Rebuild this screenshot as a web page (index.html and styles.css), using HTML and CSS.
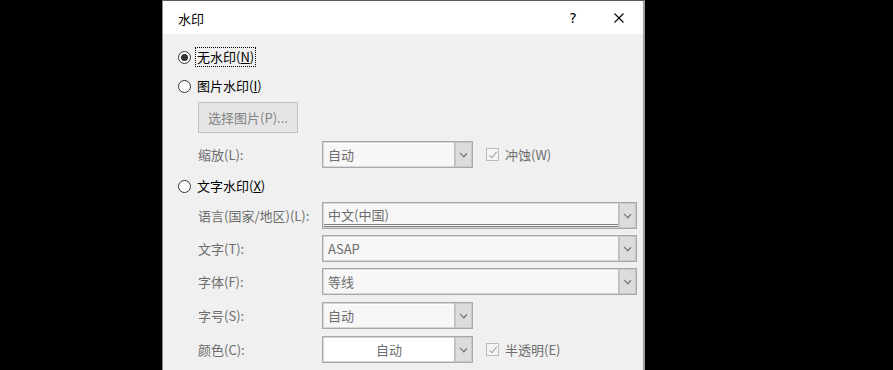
FILE: index.html
```html
<!DOCTYPE html>
<html lang="zh-CN">
<head>
  <meta charset="UTF-8">
  <meta name="viewport" content="width=device-width,initial-scale=1.0">
  <title>水印</title>
  <link rel="stylesheet" href="styles.css">
</head>
<body>
  <div class="dialog">
    <div class="titlebar">
      <span class="title">水印</span>
      <span class="tb-btn help">?</span>
      <span class="tb-btn close">
        <svg width="10" height="10" viewBox="0 0 10 10"><path d="M0.5 0.5L9.5 9.5M9.5 0.5L0.5 9.5" stroke="#000" stroke-width="1.1" fill="none"/></svg>
      </span>
    </div>

    <div class="content">
      <div class="radio-row r1">
        <span class="radio checked"></span>
        <span class="radio-label focus">无水印(<u>N</u>)</span>
      </div>
      <div class="radio-row r2">
        <span class="radio"></span>
        <span class="radio-label">图片水印(<u>I</u>)</span>
      </div>
      <div class="btn-row">
        <span class="button">选择图片(P)...</span>
      </div>
      <div class="form-row scale-row">
        <span class="field-label">缩放(L):</span>
        <div class="combo short"><span class="combo-text">自动</span><span class="drop"></span></div>
        <span class="check"></span><span class="check-label">冲蚀(W)</span>
      </div>

      <div class="radio-row r3">
        <span class="radio"></span>
        <span class="radio-label">文字水印(<u>X</u>)</span>
      </div>
      <div class="form-row lang-row">
        <span class="field-label">语言(国家/地区)(L):</span>
        <div class="combo long"><span class="combo-text lined">中文(中国)</span><span class="drop"></span></div>
      </div>
      <div class="form-row">
        <span class="field-label">文字(T):</span>
        <div class="combo long"><span class="combo-text">ASAP</span><span class="drop"></span></div>
      </div>
      <div class="form-row">
        <span class="field-label">字体(F):</span>
        <div class="combo long"><span class="combo-text">等线</span><span class="drop"></span></div>
      </div>
      <div class="form-row gap7">
        <span class="field-label">字号(S):</span>
        <div class="combo short"><span class="combo-text">自动</span><span class="drop"></span></div>
      </div>
      <div class="form-row gap7">
        <span class="field-label">颜色(C):</span>
        <div class="combo short"><span class="combo-text centered white">自动</span><span class="drop"></span></div>
        <span class="check"></span><span class="check-label">半透明(E)</span>
      </div>
    </div>
  </div>
</body>
</html>
```

FILE: styles.css
```css
body {
  margin: 0;
  background: #000;
}

.dialog {
  margin-left: 162px;
  width: 483px;
  height: 370px;
  box-sizing: border-box;
  border-top: 1px solid #5a5a5a;
  border-left: 1px solid #8c8c8c;
  border-right: 2px solid #9c9c9c;
  background: #f0f0f0;
  overflow: hidden;
  font-family: "Noto Sans CJK SC", sans-serif;
  font-size: 13px;
  color: #000;
}

.titlebar {
  height: 33px;
  background: #fff;
  display: flex;
  align-items: center;
  padding-left: 15px;
}
.title {
  flex: 1;
  padding-top: 1px;
}
.tb-btn {
  width: 46px;
  height: 33px;
  display: flex;
  align-items: center;
  justify-content: center;
}
.help {
  font-family: "DejaVu Sans", sans-serif;
  font-size: 14px;
}
.close {
  margin-right: 1px;
}

.content {
  padding-left: 15px;
}

/* radio buttons */
.radio-row {
  display: flex;
  align-items: center;
  height: 22px;
}
.r1 { margin-top: 12px; }
.r2 { margin-top: 7px; }
.r3 { margin-top: 7px; }
.radio {
  width: 13px;
  height: 13px;
  box-sizing: border-box;
  border: 1px solid #333;
  border-radius: 50%;
  background: #fff;
  display: flex;
  align-items: center;
  justify-content: center;
}
.radio.checked::after {
  content: "";
  width: 7px;
  height: 7px;
  border-radius: 50%;
  background: #333;
}
.radio-label {
  margin-left: 4px;
  padding: 0 1px;
  line-height: 18px;
  border: 1px solid transparent;
}
.radio-label.focus {
  border: 1px dotted #000;
}

/* image watermark button */
.btn-row {
  margin-top: 5px;
  margin-left: 20px;
}
.button {
  display: inline-flex;
  align-items: center;
  justify-content: center;
  width: 100px;
  height: 31px;
  box-sizing: border-box;
  border: 1px solid #bfbfbf;
  background: #e5e5e5;
  color: #838383;
}

/* labelled fields */
.form-row {
  display: flex;
  align-items: center;
  margin-top: 6px;
  margin-left: 20px;
}
.scale-row { margin-top: 8px; }
.lang-row { margin-top: 5px; }
.form-row.gap7 { margin-top: 7px; }
.field-label {
  width: 124px;
  color: #6d6d6d;
}

.combo {
  display: flex;
  height: 27px;
  box-sizing: border-box;
  border: 1px solid #a9a9a9;
  box-shadow: inset 0 0 0 1px #d6d6d6;
  background: #f7f7f7;
}
.combo.short { width: 151px; }
.combo.long { width: 315px; }
.combo-text {
  flex: 1;
  display: flex;
  align-items: center;
  padding-left: 4px;
  padding-bottom: 2px;
  margin: 1px 0 1px 1px;
  color: #6d6d6d;
  background: #f7f7f7;
  border-top: 1px solid #fff;
}
.combo-text.lined {
  padding-bottom: 0;
  margin-bottom: 1px;
  border-bottom: 3px double #808080;
}
.combo-text.centered {
  justify-content: center;
  padding-left: 0;
}
.combo-text.white {
  background: #fff;
}
.drop {
  width: 17px;
  background: #dcdcdc;
  border-left: 1px solid #bdbdbd;
  box-shadow: inset 0 0 0 1px #c8c8c8;
  display: flex;
  align-items: center;
  justify-content: center;
}
.drop::after {
  content: "";
  width: 4px;
  height: 4px;
  border-right: 1px solid #6a6a6a;
  border-bottom: 1px solid #6a6a6a;
  transform: rotate(45deg) scaleX(1.2);
  margin-top: -3px;
}

/* disabled checkboxes */
.check {
  width: 13px;
  height: 13px;
  box-sizing: border-box;
  border: 1px solid #bcbcbc;
  background: #f4f4f4;
  margin-left: 13px;
  display: flex;
  align-items: center;
  justify-content: center;
}
.check::after {
  content: "";
  width: 3px;
  height: 7px;
  border-right: 1px solid #a0a0a0;
  border-bottom: 1px solid #a0a0a0;
  transform: rotate(40deg);
  margin-top: -2px;
}
.check-label {
  margin-left: 6px;
  color: #6d6d6d;
}
```
